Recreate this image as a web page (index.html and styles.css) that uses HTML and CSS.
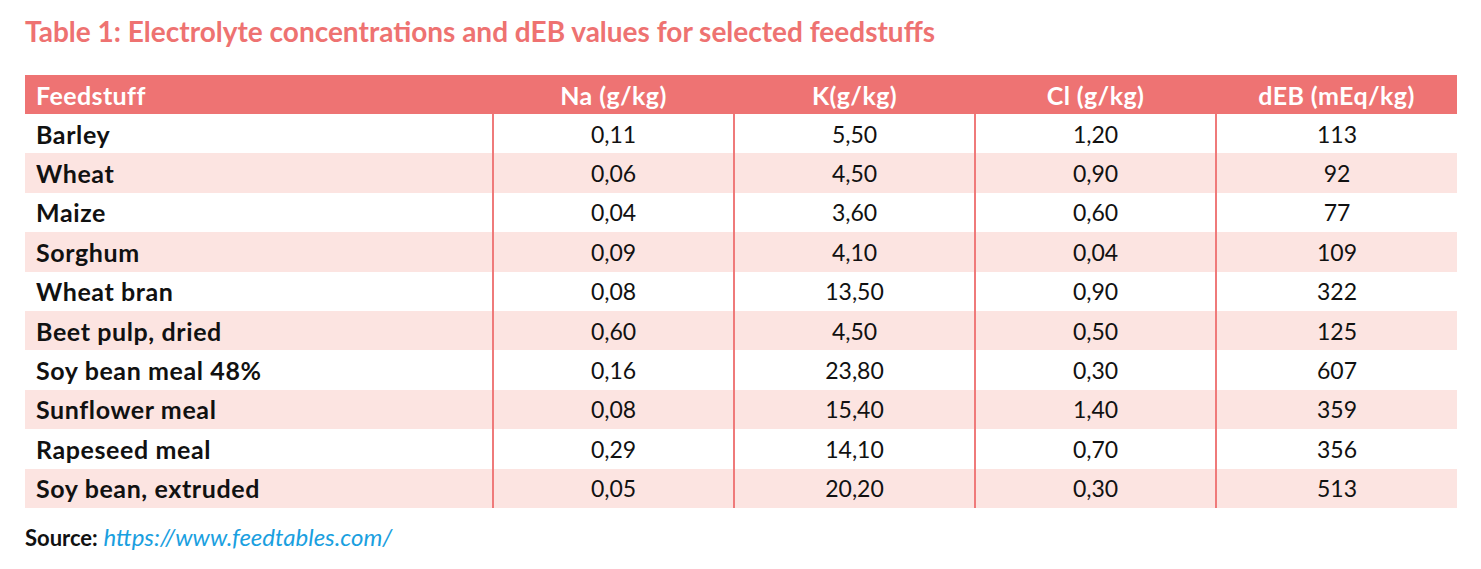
FILE: index.html
```html
<!DOCTYPE html>
<html lang="en">
<head>
<meta charset="utf-8">
<title>Table 1</title>
<link rel="stylesheet" href="styles.css">
</head>
<body>
<div class="page">
  <h1 class="title">Table 1: Electrolyte concentrations and dEB values for selected feedstuffs</h1>
  <table class="data">
    <colgroup>
      <col class="c-name"><col class="c-num"><col class="c-num"><col class="c-num"><col class="c-num">
    </colgroup>
    <thead>
      <tr><th class="name">Feedstuff</th><th>Na (g/kg)</th><th>K(g/kg)</th><th>Cl (g/kg)</th><th>dEB (mEq/kg)</th></tr>
    </thead>
    <tbody>
      <tr><td class="name">Barley</td><td>0,11</td><td>5,50</td><td>1,20</td><td>113</td></tr>
      <tr><td class="name">Wheat</td><td>0,06</td><td>4,50</td><td>0,90</td><td>92</td></tr>
      <tr><td class="name">Maize</td><td>0,04</td><td>3,60</td><td>0,60</td><td>77</td></tr>
      <tr><td class="name">Sorghum</td><td>0,09</td><td>4,10</td><td>0,04</td><td>109</td></tr>
      <tr><td class="name">Wheat bran</td><td>0,08</td><td>13,50</td><td>0,90</td><td>322</td></tr>
      <tr><td class="name">Beet pulp, dried</td><td>0,60</td><td>4,50</td><td>0,50</td><td>125</td></tr>
      <tr><td class="name">Soy bean meal 48%</td><td>0,16</td><td>23,80</td><td>0,30</td><td>607</td></tr>
      <tr><td class="name">Sunflower meal</td><td>0,08</td><td>15,40</td><td>1,40</td><td>359</td></tr>
      <tr><td class="name">Rapeseed meal</td><td>0,29</td><td>14,10</td><td>0,70</td><td>356</td></tr>
      <tr><td class="name">Soy bean, extruded</td><td>0,05</td><td>20,20</td><td>0,30</td><td>513</td></tr>
    </tbody>
  </table>
  <p class="source"><strong>Source:</strong> <a class="link" href="#">https://www.feedtables.com/</a></p>
</div>
</body>
</html>
```
FILE: styles.css
```css
html, body {
  margin: 0;
  padding: 0;
  background: #ffffff;
}
.page {
  padding: 14px 25px 0 25px;
  font-family: Lato, "Open Sans", sans-serif;
  color: #111111;
}
.title {
  margin: 0 0 27px 0;
  font-size: 28px;
  line-height: 34px;
  font-weight: 700;
  color: #ee7271;
  letter-spacing: 0;
}
.data {
  width: 1431px;
  border-collapse: collapse;
  table-layout: fixed;
}
.c-name { width: 468px; }
.c-num { width: 241px; }
.data th {
  background: #ee7373;
  color: #ffffff;
  font-weight: 700;
  font-size: 25px;
  letter-spacing: 0.4px;
  height: 39px;
  padding: 0;
  text-align: center;
}
.data th.name {
  text-align: left;
  padding-left: 11px;
}
.data td {
  height: 39.4px;
  padding: 0;
  font-size: 23px;
  text-align: center;
  border-left: 2px solid #ef7a7a;
}
.data td.name {
  text-align: left;
  padding-left: 11px;
  font-size: 25px;
  letter-spacing: 0.6px;
  font-weight: 700;
  border-left: none;
}
.data tbody tr:nth-child(even) td {
  background: #fce4e1;
}
.source {
  margin: 15px 0 0 0;
  font-size: 22px;
  line-height: 28px;
}
.source strong {
  font-weight: 700;
}
.link {
  color: #1aa0e0;
  font-size: 24px;
  font-style: italic;
  text-decoration: none;
}
```
